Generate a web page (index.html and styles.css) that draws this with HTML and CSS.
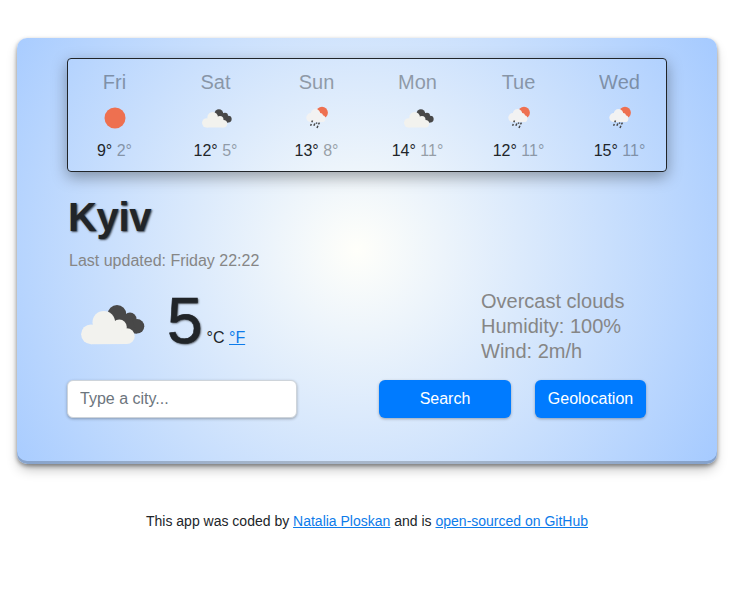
FILE: index.html
```html
<!DOCTYPE html>
<html lang="en">
<head>
<meta charset="utf-8">
<title>Weather</title>
<link rel="stylesheet" href="styles.css">
</head>
<body>
<svg class="defs" aria-hidden="true">
  <symbol id="clouds" viewBox="0 0 64 40">
    <g fill="#484848">
      <circle cx="36" cy="9.400" r="9.300"/><circle cx="49" cy="14" r="6.500"/><circle cx="56" cy="21.300" r="7.300"/>
      <path d="M34 10H50L56 28.600H40Z"/>
    </g>
    <g fill="#f2f2ee">
      <circle cx="10" cy="29.300" r="9.900"/><circle cx="22.800" cy="17.300" r="11.300"/><circle cx="38.300" cy="22" r="7.500"/><circle cx="45.800" cy="31.200" r="7.900"/>
      <path d="M10 39.200V26L22 16L38 20L46 39.100Z"/>
    </g>
  </symbol>
  <symbol id="rain" viewBox="0 0 24 24">
    <circle cx="17" cy="6.700" r="5.900" fill="#ee7050"/>
    <g fill="#f2f2f2">
      <circle cx="5.800" cy="11.600" r="4.500"/><circle cx="10.500" cy="7.800" r="4.800"/><circle cx="15" cy="10" r="3"/><circle cx="17" cy="12.700" r="3.400"/>
      <path d="M6 16.100V10H15L17 16.100Z"/>
    </g>
    <path stroke="#484848" stroke-width="1.500" d="M7.500 14.500l-.7 1.700M6.300 18l-.7 1.700M9.800 17.400l-.9 2.400M14.500 16.600l-1.100 1.800M11.800 16.500l-.5 1.300M12.900 19.800l-.9 2.200"/>
  </symbol>
  <symbol id="sun" viewBox="0 0 22 22"><circle cx="11" cy="11" r="10.500" fill="#ee7050"/></symbol>
</svg>
<main class="card">
  <section class="forecast">
    <div class="day"><div class="name">Fri</div><div class="pic"><svg class="sun"><use href="#sun"/></svg></div><div class="temps">9° <span>2°</span></div></div>
    <div class="day"><div class="name">Sat</div><div class="pic"><svg class="clouds"><use href="#clouds"/></svg></div><div class="temps">12° <span>5°</span></div></div>
    <div class="day"><div class="name">Sun</div><div class="pic"><svg class="rain"><use href="#rain"/></svg></div><div class="temps">13° <span>8°</span></div></div>
    <div class="day"><div class="name">Mon</div><div class="pic"><svg class="clouds"><use href="#clouds"/></svg></div><div class="temps">14° <span>11°</span></div></div>
    <div class="day"><div class="name">Tue</div><div class="pic"><svg class="rain"><use href="#rain"/></svg></div><div class="temps">12° <span>11°</span></div></div>
    <div class="day"><div class="name">Wed</div><div class="pic"><svg class="rain"><use href="#rain"/></svg></div><div class="temps">15° <span>11°</span></div></div>
  </section>
  <h1>Kyiv</h1>
  <p class="updated">Last updated: Friday 22:22</p>
  <section class="current">
    <svg class="now"><use href="#clouds"/></svg>
    <div class="reading"><strong>5</strong><span>°C <a href="#">°F</a></span></div>
    <ul><li>Overcast clouds</li><li>Humidity: 100%</li><li>Wind: 2m/h</li></ul>
  </section>
  <form>
    <input type="text" placeholder="Type a city...">
    <button class="search" type="button">Search</button>
    <button class="geo" type="button">Geolocation</button>
  </form>
</main>
<footer>This app was coded by <a href="#">Natalia Ploskan</a> and is <a href="#">open-sourced on GitHub</a></footer>
</body>
</html>
```
FILE: styles.css
```css
* { box-sizing: border-box; }
body {
  margin: 0;
  padding-top: 38px;
  font: 16px/24px "Liberation Sans", Arial, sans-serif;
  color: #212529;
  background: #fff;
}
.defs { position: absolute; width: 0; height: 0; }
a { color: #0d7bea; }
.card {
  width: 700px;
  height: 426px;
  margin: 0 auto;
  padding: 20px 50px 0;
  border-radius: 10px;
  background: radial-gradient(circle at 48.6% 49.8%, #fffffa 0%, #a5caff 100%);
  box-shadow: rgba(0,0,0,.4) 0 2px 4px, rgba(0,0,0,.3) 0 7px 13px -3px, rgba(0,0,0,.2) 0 -3px 0 inset;
}
.forecast {
  display: grid;
  grid-template-columns: repeat(6, 101px);
  justify-content: center;
  height: 114px;
  padding-top: 8px;
  border: 1px solid #212529;
  border-radius: 4px;
  box-shadow: rgba(0,0,0,.35) 0 5px 15px;
  text-align: center;
}
.name { font-size: 20px; line-height: 30px; opacity: .4; }
.pic { display: flex; align-items: center; justify-content: center; height: 42px; }
.sun { width: 22px; height: 22px; }
.clouds { width: 30px; height: 19px; margin-left: 2px; }
.rain { width: 24px; height: 24px; }
.temps { line-height: 24px; }
.temps span { opacity: .4; }
h1 {
  margin: 21px 0 0 1px;
  font-size: 40px;
  line-height: 48px;
  letter-spacing: -.3px;
  text-shadow: 1px 1px 2px rgba(0,0,0,.7);
}
.updated { margin: 8px 0 0 2px; color: #868686; }
.current { display: flex; height: 107px; }
.now { width: 64px; height: 40px; margin: 32px 0 0 14px; }
.reading { display: flex; align-items: baseline; width: 336px; margin-left: 22px; }
.reading strong {
  font-size: 64px;
  line-height: 96px;
  font-weight: 400;
  text-shadow: 1px 1px 2px rgba(0,0,0,.7);
  -webkit-text-stroke: .6px #212529;
}
.reading span { margin-left: 4px; }
ul { margin: 16px 0 0 -22px; padding: 0; list-style: none; font-size: 20px; line-height: 25px; color: #868686; white-space: nowrap; }
form { display: flex; }
input, button { height: 38px; border-radius: 6px; font: inherit; }
input {
  width: 230px;
  padding: 6px 12px;
  border: 1px solid #ced4da;
  background: #fff;
  box-shadow: rgba(0,0,0,.3) 0 1px 3px;
}
input::placeholder { color: #6c757d; opacity: 1; }
button { padding: 0; border: 0; color: #fff; background: #007bff; box-shadow: rgba(0,0,0,.3) 0 1px 3px; }
.search { width: 132px; margin-left: 82px; }
.geo { width: 111px; margin-left: 24px; }
footer { margin-top: 47px; font-size: 14px; line-height: 21px; text-align: center; }
```
